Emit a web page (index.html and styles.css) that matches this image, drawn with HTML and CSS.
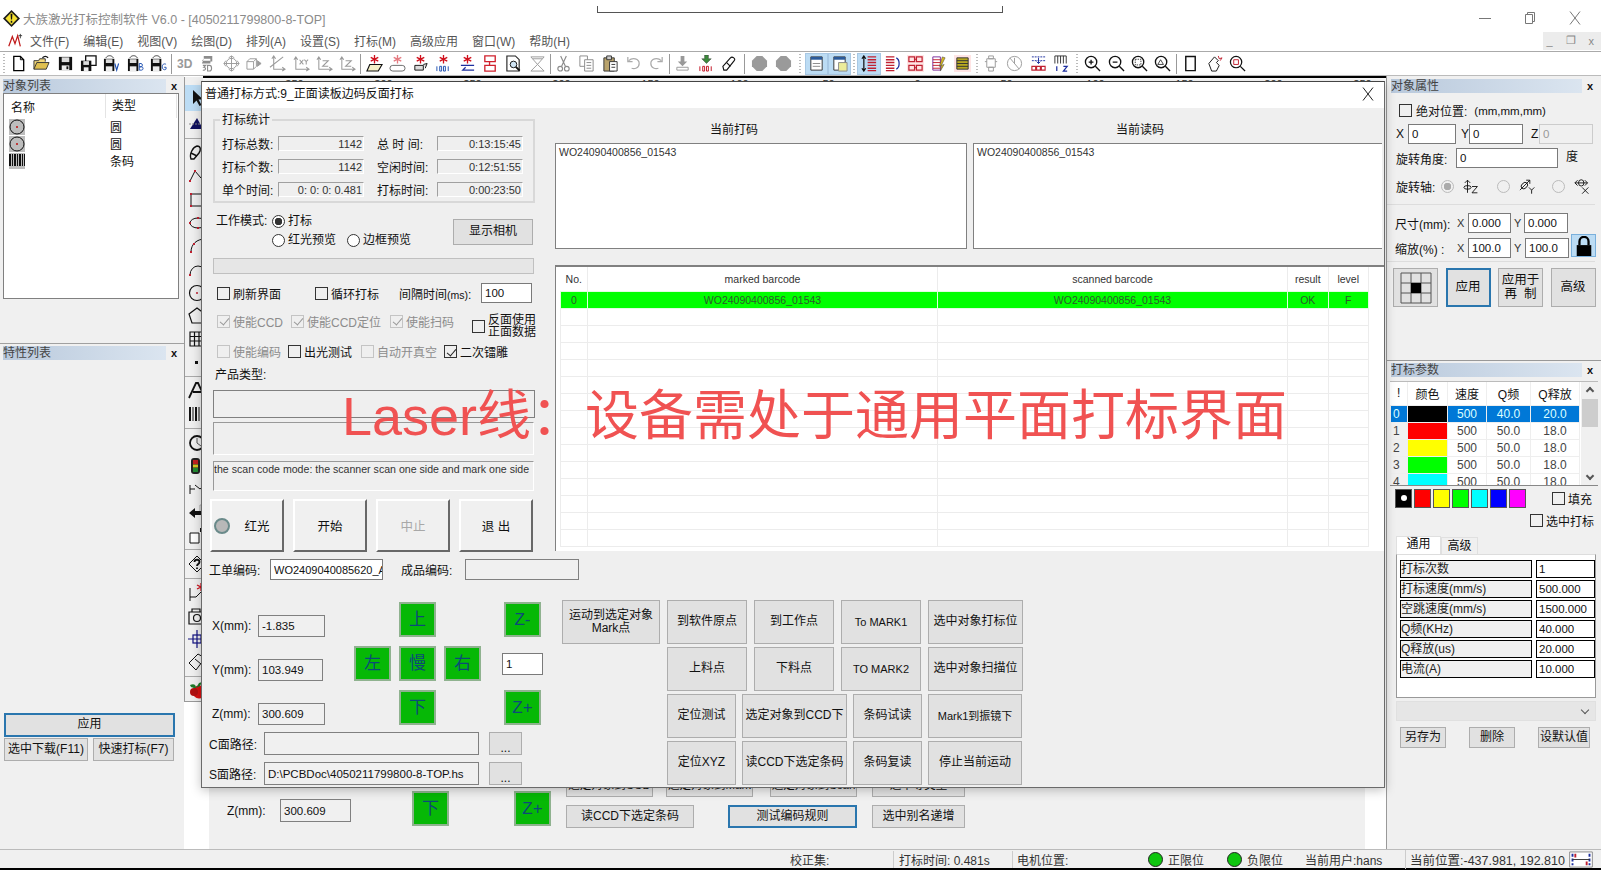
FILE: index.html
```html
<!DOCTYPE html>
<html>
<head>
    <title>大族激光打标控制软件 V6.0</title>
    <link rel="stylesheet" href="styles.css">
</head>
<body>
<svg class="defs" width="0" height="0">
    <symbol id="i-new" viewBox="0 0 18 18"><path d="M4 1.500h7l3.500 3.500v11.500h-10.500z" fill="#fff" stroke="#000" stroke-width="1.400"/><path d="M11 1.500v3.500h3.500" fill="none" stroke="#000"/></symbol>
    <symbol id="i-open" viewBox="0 0 18 18"><path d="M1 15V6h5l1-2h6v3" fill="#f4d97a" stroke="#333"/><path d="M1 15l3-7h13l-3 7z" fill="#e0c050" stroke="#333"/><path d="M10 3c2-2 4-2 6 0" fill="none" stroke="#111" stroke-width="1.400"/></symbol>
    <symbol id="i-save" viewBox="0 0 18 18"><path d="M2 2h14v14H2z" fill="#111"/><path d="M5 2.500h8v5H5z" fill="#ddd"/><path d="M5 11h8v5H5z" fill="#eee"/><path d="M10 12h2v3h-2z" fill="#111"/></symbol>
    <symbol id="i-saveall" viewBox="0 0 18 18"><path d="M6 1h11v10H6z" fill="#fff" stroke="#111" stroke-width="1.400"/><path d="M1 6h11v11H1z" fill="#111"/><path d="M3.500 6.500h6v4h-6z" fill="#ddd"/><path d="M4 13h5v4H4z" fill="#eee"/></symbol>
    <symbol id="i-savev" viewBox="0 0 18 18"><path d="M1 4h11v13H1z" fill="#111"/><path d="M3 4.500h7v4H3z" fill="#ddd"/><path d="M3 12h7v5H3z" fill="#eee"/><path d="M3 3c2-3 6-3 8 0" fill="none" stroke="#333"/><path d="M12.500 9l2 7 2-7" fill="none" stroke="#1d4fb0" stroke-width="1.200"/></symbol>
    <symbol id="i-saveb" viewBox="0 0 18 18"><path d="M1 4h11v13H1z" fill="#111"/><path d="M3 4.500h7v4H3z" fill="#ddd"/><path d="M3 12h7v5H3z" fill="#eee"/><path d="M3 3c2-3 6-3 8 0" fill="none" stroke="#333"/><path d="M13 9v7h2.500c2 0 2-3.500 0-3.500H13m0 0h2c1.700 0 1.700-3.500 0-3.500h-2" fill="none" stroke="#1d4fb0"/></symbol>
    <symbol id="i-saveg" viewBox="0 0 18 18"><path d="M1 4h11v13H1z" fill="#111"/><path d="M3 4.500h7v4H3z" fill="#ddd"/><path d="M3 12h7v5H3z" fill="#eee"/><path d="M3 3c2-3 6-3 8 0" fill="none" stroke="#333"/><path d="M17 10c-1-1-4-1-4 2.500s3 3.500 4 2.500v-2h-2" fill="none" stroke="#1d4fb0"/></symbol>
    <symbol id="i-cube3d" viewBox="0 0 18 18"><path d="M4 1h9v3H4zM4 4l-2 2h9v3H2zM11 4h2v3h-2z" fill="#8c8c8c"/><path d="M3 11h3l-2 2c3 0 2 4-1 3M8 11v6h2c3 0 3-6 0-6z" fill="none" stroke="#8c8c8c" stroke-width="1.200"/></symbol>
    <symbol id="i-orbit" viewBox="0 0 18 18" fill="none" stroke="#9a9a9a"><circle cx="9" cy="9" r="5.500"/><path d="M9 1v16M1 9h16M6 3l3-2 3 2M6 15l3 2 3-2M3 6L1 9l2 3M15 6l2 3-2 3"/></symbol>
    <symbol id="i-boxarrow" viewBox="0 0 18 18" fill="none" stroke="#9a9a9a"><path d="M1 7l3-3h7v8l-3 3H1zM1 7h7v8M8 7l3-3"/><path d="M12 6l4 3-4 3z" fill="#9a9a9a"/></symbol>
    <symbol id="i-axes" viewBox="0 0 18 18" fill="none" stroke="#9a9a9a" stroke-width="1.100"><path d="M5 1v14h12M1 13l14-11M3 4l2-3 2 3M14 13l3 2-3 2"/></symbol>
    <symbol id="i-axesxy" viewBox="0 0 18 18" fill="none" stroke="#9a9a9a" stroke-width="1.100"><path d="M3 2v13h14M1 5l2-3 2 3M14 13l3 2-3 2M7 5l4 5M11 5l-4 5M12 5l2 2 2-2M14 7v3"/></symbol>
    <symbol id="i-axesz" viewBox="0 0 18 18" fill="none" stroke="#9a9a9a" stroke-width="1.100"><path d="M3 2v13h14M1 5l2-3 2 3M14 13l3 2-3 2M7 6h6l-6 6h6"/></symbol>
    <symbol id="i-star" viewBox="0 0 18 18" stroke="#d0101c" stroke-width="1.400"><path d="M9 0v9M5 2.500l8 4M13 2.500l-8 4"/></symbol>
    <symbol id="i-mark1" viewBox="0 0 18 18"><use href="#i-star"/><path d="M4 10h13l-4 7H1z" fill="#f5f0c8" stroke="#111" stroke-width="1.200"/></symbol>
    <symbol id="i-mark2" viewBox="0 0 18 18"><use href="#i-star" opacity=".55"/><path d="M4 11h10a3 3 0 0 1 0 6H4a3 3 0 0 1 0-6z" fill="#fff" stroke="#666"/></symbol>
    <symbol id="i-mark3" viewBox="0 0 18 18"><use href="#i-star"/><path d="M3 11h9v5H3zM12 10l4-1-2 5" fill="#ddd" stroke="#111"/></symbol>
    <symbol id="i-mark4" viewBox="0 0 18 18"><use href="#i-star"/><path d="M2 12v5M5 12h2v5H5zM9 12h2v5H9zM14 12v5" fill="none" stroke="#1d4fb0"/></symbol>
    <symbol id="i-mark5" viewBox="0 0 18 18"><use href="#i-star"/><path d="M2 11h14M16 16H4l3-3" fill="none" stroke="#1d2f9f" stroke-width="1.300"/></symbol>
    <symbol id="i-linked" viewBox="0 0 18 18" fill="none" stroke="#d0202c" stroke-width="1.400"><path d="M3 1h11v6H3zM3 11h11v6H3zM8 7v4"/></symbol>
    <symbol id="i-preview" viewBox="0 0 18 18"><path d="M2 1h9l4 4v12H2z" fill="#fff" stroke="#222" stroke-width="1.200"/><circle cx="9" cy="10" r="3.500" fill="#cfe4f4" stroke="#111"/><path d="M11.500 12.500l4 4" stroke="#111" stroke-width="2"/></symbol>
    <symbol id="i-hourglass" viewBox="0 0 18 18" fill="none" stroke="#9a9a9a"><path d="M2 2h14L9 10zM9 10l-7 7h14zM4 4h10"/></symbol>
    <symbol id="i-cut" viewBox="0 0 18 18" fill="none" stroke="#8a8a8a" stroke-width="1.200"><path d="M6 1l5 11M12 1l-5 11"/><circle cx="5.500" cy="14.500" r="2.500"/><circle cx="12.500" cy="14.500" r="2.500"/></symbol>
    <symbol id="i-copy" viewBox="0 0 18 18" fill="#fff" stroke="#8a8a8a"><path d="M2 1h8v11H2z"/><path d="M7 5h9v12H7z"/><path d="M9 8h5M9 11h5M9 14h5"/></symbol>
    <symbol id="i-paste" viewBox="0 0 18 18"><path d="M2 3h11v14H2z" fill="#b9a36c" stroke="#333"/><path d="M5 1h5v4H5z" fill="#ccc" stroke="#333"/><path d="M8 7h8v10H8z" fill="#fff" stroke="#333"/><path d="M10 10h4M10 13h4" stroke="#333"/></symbol>
    <symbol id="i-undo" viewBox="0 0 18 18" fill="none" stroke="#aaa" stroke-width="1.300"><path d="M4 6c4-4 11-2 11 3s-5 6-8 5M3 2v5h5"/></symbol>
    <symbol id="i-redo" viewBox="0 0 18 18" fill="none" stroke="#aaa" stroke-width="1.300"><path d="M14 6c-4-4-11-2-11 3s5 6 8 5M15 2v5h-5"/></symbol>
    <symbol id="i-down" viewBox="0 0 18 18"><path d="M7 1h4v6h3l-5 5-5-5h3z" fill="#999"/><path d="M3 13h12v3H3z" fill="none" stroke="#999"/></symbol>
    <symbol id="i-down1001" viewBox="0 0 18 18"><path d="M7 0h4v4h3l-5 5-5-5h3z" fill="#3c8a3c" stroke="#333" stroke-width=".5"/><path d="M2 12v5M5 12h2v5H5zM9 12h2v5H9zM14 12v5" fill="none" stroke="#c01020"/></symbol>
    <symbol id="i-eraser" viewBox="0 0 18 18" fill="#fff" stroke="#111" stroke-width="1.200"><path d="M2 12l8-9c2-2 6 1 4 3l-8 10H3z"/><path d="M6 8l4 4"/></symbol>
    <symbol id="i-octo" viewBox="0 0 18 18"><path d="M6 1h6l5 5v6l-5 5H6l-5-5V6z" fill="#9a9a9a"/></symbol>
    <symbol id="i-panel1" viewBox="0 0 18 18"><path d="M3 2h12v14H3z" fill="#fff" stroke="#333"/><path d="M3 2h12v3H3z" fill="#2a5a9a"/><path d="M5 9h8M5 12h8" stroke="#888"/></symbol>
    <symbol id="i-panel2" viewBox="0 0 18 18"><path d="M3 2h12v14H3z" fill="#fff" stroke="#333"/><path d="M3 2h12v3H3z" fill="#2a5a9a"/><path d="M8 8h9v9H8z" fill="#ecec9a" stroke="#888"/></symbol>
    <symbol id="i-spacing" viewBox="0 0 18 18"><path d="M3 1v16M1 4l2-3 2 3M1 14l2 3 2-3" fill="none" stroke="#111" stroke-width="1.300"/><path d="M7 2h9M7 5h9M7 8h9M7 11h9M7 14h9M7 16.500h9" stroke="#c02030" stroke-width="1.500"/></symbol>
    <symbol id="i-spacing2" viewBox="0 0 18 18"><path d="M2 2h9M2 5h9M2 8h9M2 11h9M2 14h9M2 16.500h9" stroke="#c02030" stroke-width="1.500"/><path d="M13 3c4 2 4 10 0 12" fill="none" stroke="#1d2f9f" stroke-width="1.300"/></symbol>
    <symbol id="i-nodes" viewBox="0 0 18 18" fill="none" stroke="#c02030" stroke-width="1.300"><path d="M2 2h6v5H2zM10 2h6v5h-6zM2 11h6v5H2zM10 11h6v5h-6zM8 4.500h2M8 13.500h2"/></symbol>
    <symbol id="i-hatch" viewBox="0 0 18 18"><path d="M3 2h8v14H3z" fill="none" stroke="#7a2a9a"/><path d="M3 5h8M3 8h8M3 11h8M3 14h8" stroke="#c02030"/><path d="M13 2l3 1-4 8 3-1-4 7 1-6-2 1z" fill="#d8b820" stroke="#333" stroke-width=".5"/></symbol>
    <symbol id="i-stack" viewBox="0 0 18 18"><path d="M3 3h12v12H3z" fill="#b8a820" stroke="#333"/><path d="M3 6h12M3 9h12M3 12h12" stroke="#333"/></symbol>
    <symbol id="i-lens" viewBox="0 0 18 18" fill="none" stroke="#9a9a9a"><path d="M6 1h5v3H6zM4 4h9v9H4zM6 13h5v4H6zM2 7h2M13 7h2"/></symbol>
    <symbol id="i-ban" viewBox="0 0 18 18" fill="none" stroke="#9a9a9a"><circle cx="9" cy="9" r="7.500"/><path d="M4 3l10 12M9 3v6"/></symbol>
    <symbol id="i-arr" viewBox="0 0 18 18" fill="none"><path d="M2 2h14M2 6h14" stroke="#1d2f9f" stroke-dasharray="2 1"/><path d="M9 3v6m-2-2l2 2 2-2" stroke="#1d2f9f"/><path d="M2 12h4v4H2zM7 12h4v4H7zM12 12h4v4h-4z" stroke="#c02030" stroke-width="1.200"/></symbol>
    <symbol id="i-num" viewBox="0 0 18 18" fill="none"><path d="M2 1v8M5 1v8M8 1v8M11 1v8M14 1v8M2 1h12" stroke="#333"/><path d="M4 12v5M11 12h4l-4 5h4" stroke="#1d2f9f" stroke-width="1.300"/></symbol>
    <symbol id="i-zoomin" viewBox="0 0 18 18" fill="none" stroke="#111" stroke-width="1.400"><circle cx="7.500" cy="7.500" r="6"/><path d="M12 12l5 5M5 7.500h5M7.500 5v5" /></symbol>
    <symbol id="i-zoomout" viewBox="0 0 18 18" fill="none" stroke="#111" stroke-width="1.400"><circle cx="7.500" cy="7.500" r="6"/><path d="M12 12l5 5M5 7.500h5"/></symbol>
    <symbol id="i-zoomsel" viewBox="0 0 18 18" fill="none" stroke="#111" stroke-width="1.400"><circle cx="7.500" cy="7.500" r="6"/><path d="M12 12l5 5"/><path d="M4.500 4.500h6v6h-6z" stroke-width=".8" stroke-dasharray="1.500 1"/></symbol>
    <symbol id="i-zoomall" viewBox="0 0 18 18" fill="none" stroke="#111" stroke-width="1.400"><circle cx="7.500" cy="7.500" r="6"/><path d="M12 12l5 5"/><path d="M4 10l3-5 3 5z" stroke-width=".8"/></symbol>
    <symbol id="i-page" viewBox="0 0 18 18"><path d="M4 1.500h10v15H4z" fill="#fff" stroke="#111" stroke-width="1.500"/></symbol>
    <symbol id="i-hand" viewBox="0 0 18 18" fill="none" stroke="#111"><path d="M3 9l6-7 4 4-2 2 3 3-3 6H6z"/><path d="M13 1l1 3 3-1-2 3" stroke="#c02030"/></symbol>
    <symbol id="i-zoomred" viewBox="0 0 18 18" fill="none" stroke="#111" stroke-width="1.300"><circle cx="7.500" cy="7.500" r="6"/><path d="M12 12l5 5"/><path d="M5 5h5v5H5z" stroke="#c02030" stroke-width="1"/></symbol>
    <symbol id="v-select" viewBox="0 0 18 18"><path d="M5 1v14l3.500-3.500 3 5.500 2-1-3-5.500h4.500z" fill="#111"/></symbol>
    <symbol id="v-node" viewBox="0 0 18 18"><path d="M2 13L9 2l6 11z" fill="#101060"/><path d="M1 8h16" stroke="#888" stroke-dasharray="2 1"/></symbol>
    <symbol id="v-pen" viewBox="0 0 18 18" fill="none" stroke="#111" stroke-width="1.400"><path d="M3 15c-2-5 2-12 6-13 4 0 4 4 2 7l-5 6z"/><path d="M3 9l6 3"/></symbol>
    <symbol id="v-curve" viewBox="0 0 18 18" fill="none" stroke="#111"><path d="M2 14L7 4l6 7 4-5"/><path d="M1 14h2M7 3v2" stroke="#c02030" stroke-width="2"/></symbol>
    <symbol id="v-rect" viewBox="0 0 18 18"><path d="M3 3h14v12H3z" fill="none" stroke="#111"/><path d="M2 14h2v2H2zM2 2h2v2H2z" fill="#c02030"/></symbol>
    <symbol id="v-ellipse" viewBox="0 0 18 18"><ellipse cx="10" cy="9" rx="8" ry="5" fill="none" stroke="#111"/><path d="M9 3h2v2H9zM9 13h2v2H9zM1 8h2v2H1z" fill="#c02030"/></symbol>
    <symbol id="v-arc" viewBox="0 0 18 18"><path d="M3 15C3 7 9 2 17 2" fill="none" stroke="#111"/><path d="M2 14h2v2H2zM5 6h2v2H5z" fill="#c02030"/></symbol>
    <symbol id="v-arc2" viewBox="0 0 18 18"><path d="M2 15a8 9 0 0 1 16 0" fill="none" stroke="#111"/><path d="M1 14h2v2H1z" fill="#c02030"/></symbol>
    <symbol id="v-circle" viewBox="0 0 18 18"><circle cx="9" cy="9" r="7.500" fill="none" stroke="#111" stroke-width="1.200"/><circle cx="9" cy="9" r="1" fill="#c02030"/></symbol>
    <symbol id="v-poly" viewBox="0 0 18 18"><path d="M9 1l8 6-3 9H4L1 7z" fill="none" stroke="#111" stroke-width="1.200"/></symbol>
    <symbol id="v-grid" viewBox="0 0 18 18"><path d="M2 2h14v14H2zM2 6.500h14M2 11h14M6.500 2v14M11 2v14" fill="none" stroke="#111" stroke-width="1.200"/></symbol>
    <symbol id="v-dot" viewBox="0 0 18 18"><path d="M7 7h3v3H7z" fill="#111"/></symbol>
    <symbol id="v-text" viewBox="0 0 18 18"><path d="M1 16L8 1h2l7 15M5 10h8" fill="none" stroke="#111" stroke-width="1.800"/></symbol>
    <symbol id="v-barcode" viewBox="0 0 18 18"><path d="M1 2h2v14H1zM4.500 2h1v14h-1zM7 2h2v14H7zM10.500 2h1v14h-1zM13 2h2v14h-2zM16 2h1v14h-1z" fill="#111"/></symbol>
    <symbol id="v-clock" viewBox="0 0 18 18" fill="none" stroke="#111"><circle cx="9" cy="9" r="7" stroke-width="1.800"/><path d="M9 4v5M9 9l4 3" stroke="#555"/></symbol>
    <symbol id="v-light" viewBox="0 0 18 18"><rect x="3" y="1" width="9" height="16" rx="3" fill="#222"/><path d="M5 3h5v4H5z" fill="#c02020"/><path d="M5 7.500h5v3H5z" fill="#d8c820"/><path d="M5 11h5v4H5z" fill="#208a30"/></symbol>
    <symbol id="v-io" viewBox="0 0 18 18" fill="none" stroke="#111"><path d="M2 5v9M2 9h5M7 5l5 4 5-4"/></symbol>
    <symbol id="v-back" viewBox="0 0 18 18"><path d="M1 10l6-5v3h6v4H7v3z" fill="#111"/><path d="M12 8V2h2M15 8V3h2" fill="none" stroke="#aaa"/></symbol>
    <symbol id="v-box" viewBox="0 0 18 18"><path d="M2 6h9v10H2z" fill="#fff" stroke="#111"/><path d="M12 1h4v4h-4z" fill="#111"/></symbol>
    <symbol id="v-help" viewBox="0 0 18 18" fill="none" stroke="#111"><path d="M9 1l8 8-8 8-8-8z" stroke-linejoin="round"/><path d="M6.500 7c0-3 5-3 5 0 0 2-2.500 2-2.500 4M9 12.500v1.500" stroke-width="1.800"/></symbol>
    <symbol id="v-laser" viewBox="0 0 18 18"><path d="M2 5v14M2 14h6l5-5" fill="none" stroke="#111"/><g stroke="#d0101c" stroke-width="1.300"><path d="M13 0v8M9 2l8 4M17 2l-8 4"/></g></symbol>
    <symbol id="v-camera" viewBox="0 0 18 18" fill="none" stroke="#111" stroke-width="1.200"><path d="M1 5h16v12H1zM4 5V2h8v3"/><circle cx="9" cy="11" r="3.500"/></symbol>
    <symbol id="v-cross" viewBox="0 0 18 18" fill="none" stroke="#101080" stroke-width="1.200"><path d="M9 0v18M0 9h18"/><rect x="5" y="5" width="8" height="8"/></symbol>
    <symbol id="v-tag" viewBox="0 0 18 18" fill="none" stroke="#111"><path d="M1 10l9-9 7 4-9 12z"/><path d="M7 6l6 5"/></symbol>
    <symbol id="v-apple" viewBox="0 0 18 18"><circle cx="11" cy="11" r="6.500" fill="#d81010"/><circle cx="6" cy="11" r="4" fill="#b01010"/><path d="M2 4c4-2 6 0 6 3-3 0-5 0-6-3zM8 7l3-5 3-1-2 4z" fill="#1f7a2a"/></symbol>
    <symbol id="r-z" viewBox="0 0 18 18" fill="none" stroke="#111"><path d="M5 2v14M2 5l3-3 3 3"/><ellipse cx="5" cy="10" rx="4" ry="2"/><path d="M10 9h6l-6 7h6"/></symbol>
    <symbol id="r-y" viewBox="0 0 18 18" fill="none" stroke="#111"><path d="M1 13L12 2M8 2h4v4"/><ellipse cx="6" cy="8" rx="3" ry="4" transform="rotate(45 6 8)"/><path d="M11 10l3 3 3-3M14 13v4"/></symbol>
    <symbol id="r-x" viewBox="0 0 18 18" fill="none" stroke="#111"><path d="M1 5h14M4 2L1 5l3 3M12 2l3 3-3 3"/><ellipse cx="8" cy="5" rx="3" ry="3.500"/><path d="M9 10l7 7M16 10l-7 7"/></symbol>
    <symbol id="l-circle" viewBox="0 0 16 16"><path d="M0 0h16v16H0z" fill="#bdbdbd"/><circle cx="8" cy="8" r="7" fill="none" stroke="#111"/><circle cx="8" cy="8" r="1" fill="#c01010"/></symbol>
    <symbol id="l-barcode" viewBox="0 0 16 16"><path d="M0 0h16v16H0z" fill="#bdbdbd"/><path d="M0 1h2v12H0zM3 1h1v12H3zM5 1h2v12H5zM8 1h1v12H8zM10 1h2v12h-2zM13 1h1v12h-1zM15 1h1v12h-1z" fill="#111"/></symbol>
    <symbol id="s-lock" viewBox="0 0 18 22"><path d="M4 10V6a5 5 0 0 1 10 0v4" fill="none" stroke="#000" stroke-width="2.500"/><path d="M1 10h16v12H1z" fill="#000"/></symbol>
    <symbol id="s-grid" viewBox="0 0 32 32"><path d="M1 1h30v30H1zM1 11h30M1 21h30M11 1v30M21 1v30" fill="#e1e1e1" stroke="#555"/><path d="M11 11h10v10H11z" fill="#000"/></symbol>
    <symbol id="s-logo" viewBox="0 0 18 18"><path d="M9 0l9 9-9 9-9-9z" fill="#1a1a1a"/><path d="M9 2.500L15.500 9 9 15.500 2.500 9z" fill="#f4e033"/><path d="M8 4h2l-.4 6H8.400zM8.200 11.500h1.600v2H8.200z" fill="#111"/></symbol>
    <symbol id="s-menu" viewBox="0 0 18 18" fill="none"><path d="M2 15L6 4l3 8 3-9 3 12" stroke="#c01818" stroke-width="1.400"/><path d="M15 1v5M13 3h4" stroke="#333"/></symbol>
    <symbol id="s-chain" viewBox="0 0 26 18"><path d="M1 1h24v16H1z" fill="#fff" stroke="#888"/><path d="M4 3v12M22 3v12" stroke="#1d2f9f" stroke-width="2" stroke-dasharray="3 2"/><path d="M7 3v4M19 11v4" stroke="#c02030" stroke-width="2"/><path d="M4 9h18" stroke="#333"/></symbol>
    <symbol id="w-min" viewBox="0 0 14 14"><path d="M1 7.500h12" stroke="#777"/></symbol>
    <symbol id="w-max" viewBox="0 0 14 14" fill="#fff" stroke="#777"><path d="M4.500 1.500h7v9h-7z"/><path d="M2.500 3.500h7v9h-7z"/></symbol>
    <symbol id="w-close" viewBox="0 0 14 14" stroke="#777"><path d="M2 .5l10 13M12 .5L2 13.500" fill="none"/></symbol>
    <symbol id="w-close-dark" viewBox="0 0 14 14" stroke="#222"><path d="M2 .5l10 13M12 .5L2 13.500" fill="none"/></symbol>
</svg>

<div class="titlebar">
    <svg class="logo"><use href="#s-logo"/></svg>
    <span class="app-title">大族激光打标控制软件 V6.0 - [4050211799800-8-TOP]</span>
    <div class="scrap-line"></div>
    <div class="win-btns">
        <svg><use href="#w-min"/></svg>
        <svg><use href="#w-max"/></svg>
        <svg><use href="#w-close"/></svg>
    </div>
</div>

<div class="menubar">
    <svg class="menu-icon"><use href="#s-menu"/></svg>
    <span>文件(F)</span><span>编辑(E)</span><span>视图(V)</span><span>绘图(D)</span><span>排列(A)</span><span>设置(S)</span><span>打标(M)</span><span>高级应用</span><span>窗口(W)</span><span>帮助(H)</span>
    <div class="mdi-btns"><span>_</span><span>❐</span><span>x</span></div>
</div>

<div class="toolbar">
    <i class="grip"></i>
    <span class="tb"><svg><use href="#i-new"/></svg></span>
    <span class="tb"><svg><use href="#i-open"/></svg></span>
    <span class="tb"><svg><use href="#i-save"/></svg></span>
    <span class="tb"><svg><use href="#i-saveall"/></svg></span>
    <span class="tb"><svg><use href="#i-savev"/></svg></span>
    <span class="tb"><svg><use href="#i-saveb"/></svg></span>
    <span class="tb"><svg><use href="#i-saveg"/></svg></span>
    <i class="sep"></i>
    <span class="tb tb-3d">3D</span>
    <span class="tb"><svg><use href="#i-cube3d"/></svg></span>
    <span class="tb"><svg><use href="#i-orbit"/></svg></span>
    <span class="tb"><svg><use href="#i-boxarrow"/></svg></span>
    <span class="tb"><svg><use href="#i-axes"/></svg></span>
    <span class="tb"><svg><use href="#i-axesxy"/></svg></span>
    <span class="tb"><svg><use href="#i-axesz"/></svg></span>
    <span class="tb"><svg><use href="#i-axesz"/></svg></span>
    <i class="sep"></i>
    <span class="tb"><svg><use href="#i-mark1"/></svg></span>
    <span class="tb"><svg><use href="#i-mark2"/></svg></span>
    <span class="tb"><svg><use href="#i-mark3"/></svg></span>
    <span class="tb"><svg><use href="#i-mark4"/></svg></span>
    <span class="tb"><svg><use href="#i-mark5"/></svg></span>
    <span class="tb"><svg><use href="#i-linked"/></svg></span>
    <span class="tb"><svg><use href="#i-preview"/></svg></span>
    <span class="tb"><svg><use href="#i-hourglass"/></svg></span>
    <i class="sep"></i>
    <span class="tb"><svg><use href="#i-cut"/></svg></span>
    <span class="tb"><svg><use href="#i-copy"/></svg></span>
    <span class="tb"><svg><use href="#i-paste"/></svg></span>
    <span class="tb"><svg><use href="#i-undo"/></svg></span>
    <span class="tb"><svg><use href="#i-redo"/></svg></span>
    <i class="sep"></i>
    <span class="tb"><svg><use href="#i-down"/></svg></span>
    <span class="tb"><svg><use href="#i-down1001"/></svg></span>
    <span class="tb"><svg><use href="#i-eraser"/></svg></span>
    <i class="sep sep-3"></i>
    <span class="tb"><svg><use href="#i-octo"/></svg></span>
    <span class="tb"><svg><use href="#i-octo"/></svg></span>
    <i class="grip grip-wide"></i>
    <span class="tb tb-on"><svg><use href="#i-panel1"/></svg></span>
    <span class="tb tb-on"><svg><use href="#i-panel2"/></svg></span>
    <i class="grip"></i>
    <span class="tb tb-on"><svg><use href="#i-spacing"/></svg></span>
    <span class="tb"><svg><use href="#i-spacing2"/></svg></span>
    <span class="tb tb-pink"><svg><use href="#i-nodes"/></svg></span>
    <span class="tb"><svg><use href="#i-hatch"/></svg></span>
    <span class="tb tb-pink"><svg><use href="#i-stack"/></svg></span>
    <i class="grip"></i>
    <span class="tb"><svg><use href="#i-lens"/></svg></span>
    <span class="tb"><svg><use href="#i-ban"/></svg></span>
    <span class="tb"><svg><use href="#i-arr"/></svg></span>
    <span class="tb"><svg><use href="#i-num"/></svg></span>
    <i class="grip grip-mid"></i>
    <span class="tb"><svg><use href="#i-zoomin"/></svg></span>
    <span class="tb"><svg><use href="#i-zoomout"/></svg></span>
    <span class="tb"><svg><use href="#i-zoomsel"/></svg></span>
    <span class="tb"><svg><use href="#i-zoomall"/></svg></span>
    <i class="sep sep-2"></i>
    <span class="tb"><svg><use href="#i-page"/></svg></span>
    <span class="tb"><svg><use href="#i-hand"/></svg></span>
    <span class="tb"><svg><use href="#i-zoomred"/></svg></span>
</div>

<div class="workspace">
    <aside class="left-panel">
        <div class="panel-head"><span class="panel-title">对象列表</span><b class="panel-x">x</b></div>
        <div class="object-list">
            <div class="object-head"><span>名称</span><span>类型</span></div>
            <div class="object-row"><svg><use href="#l-circle"/></svg><span>圆</span></div>
            <div class="object-row"><svg><use href="#l-circle"/></svg><span>圆</span></div>
            <div class="object-row"><svg><use href="#l-barcode"/></svg><span>条码</span></div>
        </div>
        <div class="panel-head panel-head-second"><span class="panel-title">特性列表</span><b class="panel-x">x</b></div>
        <div class="left-actions">
            <button class="btn btn-default btn-wide">应用</button>
            <div class="left-actions-row">
                <button class="btn">选中下载(F11)</button>
                <button class="btn">快速打标(F7)</button>
            </div>
        </div>
    </aside>

    <div class="vtools-col">
        <div class="vtools">
            <span class="vt vt-on"><svg><use href="#v-select"/></svg></span>
            <span class="vt"><svg><use href="#v-node"/></svg></span>
            <i class="vsep"></i>
            <span class="vt"><svg><use href="#v-pen"/></svg></span>
            <span class="vt"><svg><use href="#v-curve"/></svg></span>
            <span class="vt"><svg><use href="#v-rect"/></svg></span>
            <span class="vt"><svg><use href="#v-ellipse"/></svg></span>
            <span class="vt"><svg><use href="#v-arc"/></svg></span>
            <span class="vt"><svg><use href="#v-arc2"/></svg></span>
            <span class="vt"><svg><use href="#v-circle"/></svg></span>
            <span class="vt"><svg><use href="#v-poly"/></svg></span>
            <span class="vt"><svg><use href="#v-grid"/></svg></span>
            <span class="vt"><svg><use href="#v-dot"/></svg></span>
            <i class="vsep"></i>
            <span class="vt"><svg><use href="#v-text"/></svg></span>
            <span class="vt"><svg><use href="#v-barcode"/></svg></span>
            <i class="vsep"></i>
            <span class="vt"><svg><use href="#v-clock"/></svg></span>
            <span class="vt"><svg><use href="#v-light"/></svg></span>
            <span class="vt"><svg><use href="#v-io"/></svg></span>
            <span class="vt"><svg><use href="#v-back"/></svg></span>
            <span class="vt"><svg><use href="#v-box"/></svg></span>
            <i class="vsep"></i>
            <span class="vt"><svg><use href="#v-help"/></svg></span>
            <i class="vsep"></i>
            <span class="vt"><svg><use href="#v-laser"/></svg></span>
            <span class="vt"><svg><use href="#v-camera"/></svg></span>
            <span class="vt"><svg><use href="#v-cross"/></svg></span>
            <span class="vt"><svg><use href="#v-tag"/></svg></span>
            <i class="vsep"></i>
            <span class="vt"><svg><use href="#v-apple"/></svg></span>
        </div>
    </div>

    <main class="canvas">
        <div class="ruler"><span>350</span><span>300</span><span>250</span><span>200</span><span>150</span><span>100</span><span>50</span><span>0</span><span>50</span><span>100</span><span>150</span><span>200</span><span>250</span></div>
        <div class="back-dialog">
            <label class="back-label">Z(mm):</label>
            <input class="txt txt-gray back-z" value="300.609">
            <button class="jog back-down">下</button>
            <button class="jog back-zplus">Z+</button>
            <div class="back-cmds">
                <div class="back-clip">
                    <button class="btn">选定对象到CCD</button>
                    <button class="btn">选定对象到Mark</button>
                    <button class="btn">选定对象到Scan</button>
                    <button class="btn">选中等类型</button>
                </div>
                <div class="back-row">
                    <button class="btn">读CCD下选定条码</button>
                    <button class="btn btn-default">测试编码规则</button>
                    <button class="btn">选中别名递增</button>
                </div>
            </div>
        </div>
    </main>

    <aside class="right-panel">
        <div class="panel-head"><span class="panel-title">对象属性</span><b class="panel-x">x</b></div>
        <div class="prop-abs"><input type="checkbox" class="cb"><span>绝对位置:</span><span class="prop-unit">(mm,mm,mm)</span></div>
        <div class="prop-xyz">
            <span>X</span><input class="txt" value="0">
            <span>Y</span><input class="txt" value="0">
            <span>Z</span><input class="txt txt-off" value="0" disabled>
        </div>
        <div class="prop-angle"><span>旋转角度:</span><input class="txt" value="0"><span class="prop-deg">度</span></div>
        <div class="prop-axis">
            <span>旋转轴:</span>
            <input type="radio" class="rb rb-off" checked disabled><svg><use href="#r-z"/></svg>
            <input type="radio" class="rb rb-off" disabled><svg><use href="#r-y"/></svg>
            <input type="radio" class="rb rb-off" disabled><svg><use href="#r-x"/></svg>
        </div>
        <div class="prop-size">
            <span>尺寸(mm):</span><span class="axis-x">X</span><input class="txt" value="0.000"><span class="axis-y">Y</span><input class="txt" value="0.000">
        </div>
        <div class="prop-scale">
            <span>缩放(%) :</span><span class="axis-x">X</span><input class="txt" value="100.0"><span class="axis-y">Y</span><input class="txt" value="100.0"><span class="lock-btn"><svg><use href="#s-lock"/></svg></span>
        </div>
        <div class="prop-btns">
            <button class="btn"><svg class="grid-icon"><use href="#s-grid"/></svg></button>
            <button class="btn btn-default">应用</button>
            <button class="btn btn-lines">应用于<br>再 &nbsp;制</button>
            <button class="btn">高级</button>
        </div>

        <div class="panel-head panel-head-params"><span class="panel-title">打标参数</span><b class="panel-x">x</b></div>
        <div class="param-box">
            <table class="param-table">
                <tr class="param-head"><th>!</th><th>颜色</th><th>速度</th><th>Q频</th><th>Q释放</th></tr>
                <tr class="param-on"><td>0</td><td class="sw-black"></td><td>500</td><td>40.0</td><td>20.0</td></tr>
                <tr><td>1</td><td class="sw-red"></td><td>500</td><td>50.0</td><td>18.0</td></tr>
                <tr><td>2</td><td class="sw-yellow"></td><td>500</td><td>50.0</td><td>18.0</td></tr>
                <tr><td>3</td><td class="sw-green"></td><td>500</td><td>50.0</td><td>18.0</td></tr>
                <tr><td>4</td><td class="sw-cyan"></td><td>500</td><td>50.0</td><td>18.0</td></tr>
            </table>
            <div class="scrollbar"><span class="chev-up"></span><i class="thumb"></i><span class="chev-down"></span></div>
        </div>
        <div class="swatch-row">
            <span class="swatch sw-black swatch-dot"></span><span class="swatch sw-red"></span><span class="swatch sw-yellow"></span><span class="swatch sw-green"></span><span class="swatch sw-cyan"></span><span class="swatch sw-blue"></span><span class="swatch sw-magenta"></span>
            <label class="chk swatch-fill"><input type="checkbox" class="cb"><span>填充</span></label>
        </div>
        <label class="chk selected-mark"><input type="checkbox" class="cb"><span>选中打标</span></label>
        <div class="tabs"><span class="tab tab-on">通用</span><span class="tab">高级</span></div>
        <div class="tab-body">
            <div class="param-row"><span>打标次数</span><input value="1"></div>
            <div class="param-row"><span>打标速度(mm/s)</span><input value="500.000"></div>
            <div class="param-row"><span>空跳速度(mm/s)</span><input value="1500.000"></div>
            <div class="param-row"><span>Q频(KHz)</span><input value="40.000"></div>
            <div class="param-row"><span>Q释放(us)</span><input value="20.000"></div>
            <div class="param-row"><span>电流(A)</span><input value="10.000"></div>
        </div>
        <div class="combo"><span class="chev-down"></span></div>
        <div class="param-actions">
            <button class="btn">另存为</button>
            <button class="btn">删除</button>
            <button class="btn">设默认值</button>
        </div>
    </aside>
</div>

<div class="statusbar">
    <span class="st-cal">校正集:</span>
    <span class="st-time">打标时间: 0.481s</span>
    <span class="st-motor">电机位置:</span>
    <span class="st-led"></span><span class="st-limit">正限位</span>
    <span class="st-led"></span><span class="st-limit st-neg">负限位</span>
    <span class="st-user">当前用户:hans</span>
    <span class="st-pos">当前位置:-437.981, 192.810</span>
    <svg class="st-chain"><use href="#s-chain"/></svg>
</div>

<div class="dialog">
    <div class="dlg-head"><span>普通打标方式:9_正面读板边码反面打标</span><svg class="dlg-x"><use href="#w-close-dark"/></svg></div>

    <div class="dlg-top">
        <div class="dlg-left">
            <fieldset class="stats">
                <legend>打标统计</legend>
                <div class="stats-grid">
                    <span>打标总数:</span><span class="field">1142</span><span class="stat-label-b">总 时 间:</span><span class="field">0:13:15:45</span>
                    <span>打标个数:</span><span class="field">1142</span><span class="stat-label-b">空闲时间:</span><span class="field">0:12:51:55</span>
                    <span>单个时间:</span><span class="field">0: 0: 0: 0.481</span><span class="stat-label-b">打标时间:</span><span class="field">0:00:23:50</span>
                </div>
            </fieldset>

            <div class="mode-row">
                <span class="mode-label">工作模式:</span>
                <div class="mode-opts">
                    <label class="chk"><input type="radio" class="rb" name="mode" checked><span>打标</span></label>
                    <div class="mode-line">
                        <label class="chk"><input type="radio" class="rb" name="mode"><span>红光预览</span></label>
                        <label class="chk"><input type="radio" class="rb" name="mode"><span>边框预览</span></label>
                    </div>
                </div>
                <button class="btn btn-camera">显示相机</button>
            </div>

            <div class="progress"></div>

            <div class="opt-row opt-row-a">
                <label class="chk"><input type="checkbox" class="cb"><span>刷新界面</span></label>
                <label class="chk"><input type="checkbox" class="cb"><span>循环打标</span></label>
                <span class="interval">间隔时间<small>(ms)</small>:</span>
                <input class="txt" value="100">
            </div>
            <div class="opt-row opt-row-b">
                <label class="chk chk-off"><input type="checkbox" class="cb" checked disabled><span>使能CCD</span></label>
                <label class="chk chk-off"><input type="checkbox" class="cb" checked disabled><span>使能CCD定位</span></label>
                <label class="chk chk-off"><input type="checkbox" class="cb" checked disabled><span>使能扫码</span></label>
                <label class="chk chk-two"><input type="checkbox" class="cb"><span class="two-line">反面使用<br>正面数据</span></label>
            </div>
            <div class="opt-row opt-row-c">
                <label class="chk chk-off"><input type="checkbox" class="cb" disabled><span>使能编码</span></label>
                <label class="chk"><input type="checkbox" class="cb"><span>出光测试</span></label>
                <label class="chk chk-off"><input type="checkbox" class="cb" disabled><span>自动开真空</span></label>
                <label class="chk"><input type="checkbox" class="cb" checked><span>二次镭雕</span></label>
            </div>

            <div class="product-label">产品类型:</div>
            <div class="box box-product"></div>
            <div class="box box-empty"></div>
            <div class="box box-mode">the scan code mode: the scanner scan one side and mark one side</div>

            <div class="big-btns">
                <button class="big-btn big-btn-red"><i class="led"></i>红光</button>
                <button class="big-btn">开始</button>
                <button class="big-btn" disabled>中止</button>
                <button class="big-btn">退 出</button>
            </div>
        </div>

        <div class="dlg-right">
            <div class="code-titles"><span>当前打码</span><span>当前读码</span></div>
            <div class="code-boxes">
                <div class="code-box">WO24090400856_01543</div>
                <div class="code-box">WO24090400856_01543</div>
            </div>
            <div class="result-wrap">
                <table class="result-table">
                    <colgroup><col class="c-no"><col class="c-code"><col class="c-code"><col class="c-res"><col class="c-res"></colgroup>
                    <tr class="result-head"><th>No.</th><th>marked barcode</th><th>scanned barcode</th><th>result</th><th>level</th></tr>
                    <tr class="result-ok"><td>0</td><td>WO24090400856_01543</td><td>WO24090400856_01543</td><td>OK</td><td>F</td></tr>
                    <tr><td></td><td></td><td></td><td></td><td></td></tr>
                    <tr><td></td><td></td><td></td><td></td><td></td></tr>
                    <tr><td></td><td></td><td></td><td></td><td></td></tr>
                    <tr><td></td><td></td><td></td><td></td><td></td></tr>
                    <tr><td></td><td></td><td></td><td></td><td></td></tr>
                    <tr><td></td><td></td><td></td><td></td><td></td></tr>
                    <tr><td></td><td></td><td></td><td></td><td></td></tr>
                    <tr><td></td><td></td><td></td><td></td><td></td></tr>
                    <tr><td></td><td></td><td></td><td></td><td></td></tr>
                    <tr><td></td><td></td><td></td><td></td><td></td></tr>
                    <tr><td></td><td></td><td></td><td></td><td></td></tr>
                    <tr><td></td><td></td><td></td><td></td><td></td></tr>
                    <tr><td></td><td></td><td></td><td></td><td></td></tr>
                    <tr><td></td><td></td><td></td><td></td><td></td></tr>
                </table>
            </div>
        </div>
    </div>

    <div class="order-row">
        <span>工单编码:</span><input class="txt" value="WO2409040085620_A">
        <span class="order-label-b">成品编码:</span><input class="txt txt-gray" value="">
    </div>

    <div class="dlg-bottom">
        <div class="motion">
            <div class="motion-top">
                <div class="coords">
                    <div class="coord"><span>X(mm):</span><input class="txt txt-gray" value="-1.835"></div>
                    <div class="coord"><span>Y(mm):</span><input class="txt txt-gray coord-short" value="103.949"></div>
                    <div class="coord"><span>Z(mm):</span><input class="txt txt-gray" value="300.609"></div>
                </div>
                <div class="jog-pad">
                    <button class="jog jog-mid">上</button>
                    <button class="jog jog-first">左</button>
                    <button class="jog">慢</button>
                    <button class="jog">右</button>
                    <button class="jog jog-mid">下</button>
                </div>
                <div class="z-col">
                    <button class="jog">Z-</button>
                    <input class="txt" value="1">
                    <button class="jog">Z+</button>
                </div>
            </div>
            <div class="path-row"><span>C面路径:</span><input class="txt txt-gray" value=""><button class="btn">...</button></div>
            <div class="path-row"><span>S面路径:</span><input class="txt txt-gray" value="D:\PCBDoc\4050211799800-8-TOP.hs"><button class="btn">...</button></div>
        </div>

        <div class="commands">
            <button class="btn btn-move">运动到选定对象<br>Mark点</button>
            <div class="cmd-grids">
                <div class="cmd-grid cmd-grid-a">
                    <button class="btn">到软件原点</button>
                    <button class="btn">到工作点</button>
                    <button class="btn btn-small">To MARK1</button>
                    <button class="btn">选中对象打标位</button>
                    <button class="btn">上料点</button>
                    <button class="btn">下料点</button>
                    <button class="btn btn-small">TO MARK2</button>
                    <button class="btn">选中对象扫描位</button>
                </div>
                <div class="cmd-grid cmd-grid-b">
                    <button class="btn">定位测试</button>
                    <button class="btn">选定对象到CCD下</button>
                    <button class="btn">条码试读</button>
                    <button class="btn btn-small">Mark1到振镜下</button>
                    <button class="btn">定位XYZ</button>
                    <button class="btn">读CCD下选定条码</button>
                    <button class="btn">条码复读</button>
                    <button class="btn">停止当前运动</button>
                </div>
            </div>
        </div>
    </div>

    <div class="watermark">Laser线：设备需处于通用平面打标界面</div>
</div>
</body>
</html>
```

FILE: styles.css
```css
* {
    box-sizing: border-box;
}
html, body {
    margin: 0;
    padding: 0;
}
body {
    position: relative;
    width: 1601px;
    height: 870px;
    overflow: hidden;
    background: #f0f0f0;
    color: #111;
    font-family: "Liberation Sans", "Noto Sans CJK SC", sans-serif;
    font-size: 12px;
    display: flex;
    flex-direction: column;
}
.defs {
    position: absolute;
}
button, input {
    font-family: inherit;
    font-size: 12px;
    color: #111;
    padding: 0;
    margin: 0;
}

/* title + menu */
.titlebar {
    height: 30px;
    background: #fff;
    display: flex;
    align-items: center;
    padding: 6px 0 0 3px;
}
.logo {
    width: 17px;
    height: 17px;
    margin-right: 3px;
}
.app-title {
    color: #8b8b8b;
    font-size: 12.5px;
}
.scrap-line {
    width: 406px;
    height: 7px;
    margin: 0 0 17px 272px;
    align-self: flex-end;
    border: 1px solid #555;
    border-top: none;
}
.win-btns {
    display: flex;
    margin-left: auto;
    margin-right: 19px;
    gap: 31px;
}
.win-btns svg {
    width: 14px;
    height: 14px;
}
.menubar {
    height: 21px;
    background: #fff;
    display: flex;
    align-items: center;
    gap: 14px;
    padding-left: 7px;
    color: #555;
}
.menu-icon {
    width: 16px;
    height: 16px;
    margin-right: -7px;
}
.mdi-btns {
    margin-left: auto;
    height: 18px;
    display: flex;
    background: #ececec;
    color: #888;
    font-size: 11px;
    gap: 13px;
    padding: 0 7px 0 3px;
    align-items: center;
}
.toolbar {
    height: 25px;
    background: #fff;
    border-top: 1px solid #aaa;
    border-bottom: 1px solid #bbb;
    display: flex;
    align-items: center;
    padding-left: 1px;
}
.tb {
    width: 23.3px;
    height: 22px;
    flex: none;
    display: flex;
    align-items: center;
    justify-content: center;
}
.tb svg {
    width: 17px;
    height: 17px;
}
.tb-3d {
    color: #999;
    font-weight: bold;
    font-size: 12px;
}
.tb-on {
    background: #bcdcf4;
    outline: 1px solid #a8c8e4;
    outline-offset: -1px;
}
.tb-pink svg {
    background: #ffe4e4;
}
.sep {
    width: 1px;
    height: 20px;
    background: #999;
    margin: 0 1px;
    flex: none;
}
.sep-2 {
    margin: 0 2px;
}
.sep-3 {
    margin: 0 3px;
}
.grip {
    width: 2px;
    height: 20px;
    margin: 0 2px;
    flex: none;
    background: repeating-linear-gradient(#bbb 0 1px, transparent 1px 3px);
}
.grip-mid {
    margin: 0 3px;
}
.grip-wide {
    margin: 0 4px;
}

/* main area */
.workspace {
    height: 773px;
    display: flex;
}
.left-panel {
    width: 184px;
    flex: none;
    padding-top: 3px;
    display: flex;
    flex-direction: column;
}
.panel-head {
    height: 14px;
    display: flex;
    align-items: center;
    flex: none;
    padding-left: 3px;
}
.panel-title {
    width: 163px;
    height: 14px;
    line-height: 14px;
    color: #444;
    background: linear-gradient(to right, #b9c9dc, #dbe5f0);
    font-size: 12px;
}
.panel-x {
    margin-left: 5px;
    font-size: 11px;
    line-height: 11px;
}
.object-list {
    width: 176px;
    height: 206px;
    margin: 0 0 0 3px;
    background: #fff;
    border: 1px solid #808080;
}
.object-head {
    height: 24px;
    display: grid;
    grid-template-columns: 94px 72px;
    align-items: center;
    padding-left: 7px;
}
.object-head span + span {
    border-left: 1px solid #e4e4e4;
    border-right: 1px solid #e4e4e4;
    padding-left: 6px;
    line-height: 24px;
}
.object-row {
    height: 17px;
    display: grid;
    grid-template-columns: 101px 1fr;
    padding-left: 5px;
    align-items: center;
}
.object-row svg {
    width: 16px;
    height: 16px;
}
.panel-head-second {
    margin-top: 44px;
    padding-top: 2px;
    height: 17px;
    border-top: 1px solid #a0a0a0;
}
.left-actions {
    margin-top: auto;
    padding: 0 8px 88px 4px;
}
.btn {
    background: #e1e1e1;
    border: 1px solid #adadad;
    color: #111;
    text-align: center;
    line-height: 1.1;
}
.btn-default {
    border: 2px solid #2a76ae;
}
.btn-small {
    font-size: 11px;
}
.btn-wide {
    width: 171px;
    height: 24px;
    display: block;
}
.left-actions-row {
    margin-top: 1px;
    display: flex;
    gap: 5px;
}
.left-actions-row .btn {
    width: 84px;
    height: 23px;
    font-size: 12px;
}
.left-actions-row .btn + .btn {
    width: 81px;
}
.vtools-col {
    width: 19px;
    flex: none;
    background: #fff;
}
.vtools {
    height: 625px;
    overflow: hidden;
    background: #f0f0f0;
    border-left: 1px solid #999;
    border-bottom: 1px solid #999;
    margin-top: 1px;
    padding-top: 8px;
    display: flex;
    flex-direction: column;
}
.vt {
    height: 23.3px;
    flex: none;
    display: flex;
    align-items: center;
    padding-left: 3px;
}
.vt svg {
    width: 18px;
    height: 18px;
    flex: none;
}
.vt-on {
    background: #bcdcf4;
    height: 26px;
    margin-bottom: 2px;
}
.vsep {
    height: 1px;
    background: #aaa;
    margin: 2px 0;
    flex: none;
}
.canvas {
    width: 1183px;
    flex: none;
    background: #fff;
    border-top: 2px solid #000;
    display: flex;
    flex-direction: column;
    justify-content: space-between;
}
.ruler {
    height: 5px;
    overflow: hidden;
    padding-left: 47px;
    display: flex;
    font-size: 11px;
    line-height: 12px;
    color: #333;
}
.ruler span {
    width: 89px;
    text-align: center;
    flex: none;
}
.back-dialog {
    width: 1156px;
    height: 62px;
    margin-left: 6px;
    padding-left: 18px;
    background: #f0f0f0;
    display: flex;
    align-items: flex-start;
}
.back-label {
    width: 53px;
    flex: none;
    margin-top: 17px;
}
.back-dialog .back-z {
    width: 71px;
    height: 23px;
    margin-top: 12px;
    flex: none;
}
.back-down {
    margin: 4px 0 0 61px;
}
.back-zplus {
    margin: 4px 15px 0 65px;
}
.back-cmds {
    flex: none;
}
.back-clip {
    height: 10px;
    overflow: hidden;
    display: flex;
    align-items: flex-end;
}
.back-clip .btn {
    width: 87px;
    height: 24px;
    flex: none;
    margin-right: 13px;
    font-size: 11.5px;
}
.back-clip .btn:nth-child(2) {
    margin-right: 17px;
}
.back-clip .btn:nth-child(3) {
    margin-right: 15px;
}
.back-clip .btn:nth-child(4) {
    width: 93px;
}
.back-row {
    display: flex;
    margin-top: 8px;
}
.back-row .btn {
    height: 23px;
    width: 128px;
}
.back-row .btn + .btn {
    margin-left: 34px;
    width: 129px;
}
.back-row .btn + .btn + .btn {
    margin-left: 15px;
    width: 93px;
}

/* right side panel */
.right-panel {
    width: 215px;
    flex: none;
    border-left: 1px solid #999;
    padding: 3px 0 0 0;
    display: flex;
    flex-direction: column;
}
.right-panel .panel-head {
    padding-left: 4px;
}
.right-panel .panel-title {
    width: 191px;
}
.txt {
    height: 20px;
    width: 100%;
    border: 1px solid #7a7a7a;
    background: #fff;
    padding-left: 3px;
    font-size: 11.5px;
    min-width: 0;
}
.txt-gray {
    background: #f0f0f0;
    border-color: #808080;
}
.txt-off {
    background: #f0f0f0;
    border-color: #ccc;
    color: #999;
}
.prop-abs {
    display: flex;
    align-items: center;
    margin-top: 9px;
    height: 17px;
    padding-left: 12px;
    gap: 4px;
}
.prop-unit {
    font-size: 11.5px;
    margin-left: 3px;
}
.prop-xyz {
    display: grid;
    grid-template-columns: 12px 48px 5px 8px 54px 8px 8px 54px;
    margin-top: 5px;
    padding-left: 9px;
    height: 20px;
    align-items: center;
}
.prop-xyz span:nth-of-type(2) {
    grid-column: 4;
}
.prop-xyz span:nth-of-type(3) {
    grid-column: 7;
}
.prop-angle {
    display: grid;
    grid-template-columns: 60px 102px 1fr;
    align-items: center;
    height: 20px;
    margin-top: 4px;
    padding-left: 9px;
}
.prop-deg {
    padding-left: 8px;
    margin-top: -5px;
}
.prop-axis {
    display: flex;
    align-items: center;
    padding-left: 9px;
    margin-top: 8px;
    height: 20px;
    white-space: nowrap;
}
.prop-axis .rb {
    margin-left: 6px;
}
.prop-axis .rb + svg {
    width: 17px;
    height: 17px;
    margin-left: 9px;
    margin-right: 11px;
}
.prop-size, .prop-scale {
    display: grid;
    grid-template-columns: 62px 11px 43px 13px 44px;
    align-items: center;
    padding-left: 8px;
    height: 20px;
}
.prop-size {
    margin-top: 17px;
    position: relative;
}
.prop-size::before {
    content: "";
    position: absolute;
    left: 0;
    right: 6px;
    top: -9px;
    border-top: 1px solid #ddd;
}
.prop-scale {
    margin-top: 5px;
    grid-template-columns: 62px 11px 43px 14px 44px 27px;
    position: relative;
}
.prop-scale::after {
    content: "";
    position: absolute;
    left: 0;
    right: 6px;
    top: 23px;
    border-top: 1px solid #ddd;
}
.axis-x {
    font-size: 11px;
    color: #333;
}
.axis-y {
    font-size: 11px;
    color: #333;
    padding-left: 3px;
}
.lock-btn {
    width: 25px;
    height: 23px;
    margin: -5px 0 0 2px;
    background: #bcdcf4;
    border: 1px solid #7ab0dc;
    display: flex;
    align-items: center;
    justify-content: center;
}
.lock-btn svg {
    width: 18px;
    height: 20px;
}
.prop-btns {
    display: grid;
    grid-template-columns: repeat(4, 45px);
    column-gap: 7.5px;
    padding-left: 6px;
    margin-top: 10px;
}
.prop-btns .btn {
    height: 39px;
    font-size: 12.5px;
}
.grid-icon {
    width: 32px;
    height: 32px;
    display: block;
    margin: auto;
}
.panel-head-params {
    margin-top: 53px;
    height: 17px;
    padding-top: 2px;
    border-top: 1px solid #999;
}
.param-box {
    margin: 4px 3px 0 3px;
    height: 105px;
    overflow: hidden;
    background: #fff;
    display: flex;
    border-bottom: 1px solid #888;
    border-top: 1px solid #bbb;
}
.param-table {
    border-collapse: collapse;
    table-layout: fixed;
    width: 190px;
    height: 103px;
    flex: none;
    font-size: 12px;
}
.param-table th {
    height: 23px;
    font-weight: normal;
    border-right: 1px solid #eee;
    padding: 0;
}
.param-table td {
    height: 17px;
    padding: 0;
    text-align: center;
    color: #444;
    border: 1px solid #eee;
}
.param-table td:first-child {
    text-align: left;
    padding-left: 2px;
    background: #f0f0f0;
}
.param-table tr > :first-child {
    width: 17px;
}
.param-table tr > :nth-child(2) {
    width: 40px;
}
.param-table tr > :nth-child(3) {
    width: 39px;
}
.param-table tr > :nth-child(4) {
    width: 44px;
}
.param-on td {
    background: #0078d7;
    color: #dff;
}
.param-table .param-on td:first-child {
    background: #0078d7;
}
.param-table .sw-black, .sw-black {
    background: #000;
}
.param-table .sw-red, .sw-red {
    background: #f00;
}
.param-table .sw-yellow, .sw-yellow {
    background: #ff0;
}
.param-table .sw-green, .sw-green {
    background: #0f0;
}
.param-table .sw-cyan, .sw-cyan {
    background: #0ff;
}
.sw-blue {
    background: #00f;
}
.sw-magenta {
    background: #f0f;
}
.scrollbar {
    width: 17px;
    margin-left: 1px;
    background: #f0f0f0;
    display: flex;
    flex-direction: column;
    align-items: center;
    flex: none;
}
.chev-up, .chev-down {
    width: 6px;
    height: 6px;
    border: solid #555;
    border-width: 2px 0 0 2px;
    transform: rotate(45deg);
    margin: 6px 0 3px;
    flex: none;
}
.chev-down {
    transform: rotate(225deg);
    margin: 2px 0 6px;
}
.thumb {
    width: 16px;
    height: 28px;
    background: #cdcdcd;
    margin: 2px 0 auto;
}
.swatch-row {
    display: flex;
    align-items: center;
    padding-left: 8px;
    margin-top: 3px;
    gap: 2px;
    height: 19px;
    flex: none;
}
.swatch {
    width: 17px;
    height: 19px;
    border: 1px solid #555;
    position: relative;
}
.swatch-dot::after {
    content: "";
    position: absolute;
    left: 5px;
    top: 5px;
    width: 6px;
    height: 6px;
    border-radius: 50%;
    background: #fff;
}
.swatch-fill {
    margin-left: auto;
    margin-right: 9px;
}
.selected-mark {
    align-self: flex-end;
    height: 15px;
    margin: 5px 7px 0 0;
}
.chk {
    display: flex;
    align-items: center;
    gap: 3px;
    white-space: nowrap;
}
.chk-off {
    color: #8c8c8c;
}
.cb {
    appearance: none;
    width: 13px;
    height: 13px;
    margin: 0;
    border: 1px solid #333;
    background: transparent;
    position: relative;
    flex: none;
}
.cb:checked::after {
    content: "";
    position: absolute;
    left: 3.5px;
    top: 0.5px;
    width: 4px;
    height: 8px;
    border: solid #222;
    border-width: 0 1.5px 1.5px 0;
    transform: rotate(40deg);
}
.cb:disabled {
    border-color: #c4c4c4;
}
.cb:disabled:checked::after {
    border-color: #999;
}
.rb {
    appearance: none;
    width: 13px;
    height: 13px;
    margin: 0;
    border: 1px solid #333;
    border-radius: 50%;
    background: #fff;
    flex: none;
}
.rb:checked {
    background: radial-gradient(circle, #333 0 3.5px, #fff 4px);
}
.rb-off {
    border-color: #bbb;
    background: #f0f0f0;
}
.rb-off:checked {
    background: radial-gradient(circle, #aaa 0 3.5px, #f0f0f0 4px);
}
.tabs {
    display: flex;
    margin: 8px 0 0 9px;
    height: 18px;
    flex: none;
}
.tab {
    width: 37px;
    background: #f0f0f0;
    border: 1px solid #e0e0e0;
    border-bottom: none;
    text-align: center;
    margin-top: 1px;
    line-height: 16px;
}
.tab-on {
    width: 45px;
    margin-top: 0;
    background: #fff;
    line-height: 14px;
}
.tab-body {
    margin-left: 9px;
    width: 200px;
    height: 144px;
    background: #fff;
    border: 1px solid #999;
    border-top: 1px solid #ddd;
    padding: 5px 2px 0 3px;
    flex: none;
}
.param-row {
    display: grid;
    grid-template-columns: 132px 59px;
    column-gap: 4px;
    height: 18px;
    margin-bottom: 2px;
}
.param-row span {
    background: #f0f0f0;
    border: 1px solid #000;
    line-height: 16px;
    white-space: nowrap;
    color: #222;
}
.param-row input {
    border: 1px solid #000;
    padding-left: 2px;
    min-width: 0;
    font-size: 11.5px;
}
.combo {
    margin: 3px 0 0 9px;
    width: 200px;
    height: 20px;
    background: #e6e6e6;
    display: flex;
    justify-content: flex-end;
    align-items: center;
    padding-right: 7px;
    border: 1px solid #e0e0e0;
    flex: none;
}
.combo .chev-down {
    border-width: 1px 0 0 1px;
    margin: 0 0 3px;
}
.param-actions {
    display: grid;
    grid-template-columns: 46px 46px 52px;
    column-gap: 23px;
    margin: 6px 0 0 13px;
}
.param-actions .btn {
    height: 21px;
}

/* status bar */
.statusbar {
    box-sizing: content-box;
    height: 18px;
    border-top: 1px solid #bbb;
    border-bottom: 2px solid #000;
    display: flex;
    align-items: center;
    color: #333;
}
.st-cal {
    margin-left: 790px;
    width: 103px;
}
.st-time {
    width: 119px;
    padding-left: 5px;
    border-left: 1px solid #ccc;
}
.st-motor {
    width: 136px;
    padding-left: 4px;
    border-left: 1px solid #ccc;
}
.st-led {
    width: 15px;
    height: 15px;
    border-radius: 50%;
    background: #0ec60e;
    border: 1px solid #222;
    flex: none;
}
.st-limit {
    width: 64px;
    padding-left: 5px;
}
.st-neg {
    width: 63px;
}
.st-user {
    width: 100px;
}
.st-pos {
    font-size: 12.5px;
    white-space: nowrap;
    padding-left: 4px;
    border-left: 1px solid #ccc;
    width: 163px;
}
.st-chain {
    width: 26px;
    height: 17px;
}

/* print dialog, floats over the main window */
.dialog {
    position: absolute;
    left: 201px;
    top: 81px;
    width: 1184px;
    height: 707px;
    background: #efefef;
    border: 1px solid #6a6a6a;
    border-top: 1px solid #444;
    box-shadow: 0 2px 10px rgba(0, 0, 0, 0.25);
}
.dlg-head {
    height: 26px;
    background: #fff;
    display: flex;
    align-items: center;
    justify-content: space-between;
    padding: 0 9px 6px 3px;
}
.dlg-x {
    width: 14px;
    height: 14px;
    margin-top: 3px;
}
.dlg-top {
    height: 444px;
    display: flex;
}
.dlg-left {
    width: 342px;
    flex: none;
    padding-left: 11px;
    padding-top: 5px;
}
.stats {
    width: 322px;
    height: 90px;
    margin: 0;
    padding: 9px 0 0 7px;
    border: 2px solid #d8d8d8;
}
.stats legend {
    padding: 0 2px;
    margin-left: -2px;
    line-height: 14px;
}
.stats-grid {
    display: grid;
    grid-template-columns: 56px 86px 73px 86px;
    grid-auto-rows: 15px;
    row-gap: 8px;
    align-items: center;
}
.stat-label-b {
    padding-left: 13px;
}
.field {
    height: 15px;
    line-height: 14px;
    text-align: right;
    padding-right: 1px;
    font-size: 11px;
    color: #333;
    border: 1px solid;
    border-color: #a0a0a0 #fff #fff #a0a0a0;
    white-space: nowrap;
}
.mode-row {
    display: flex;
    margin-top: 12px;
    height: 30px;
    padding-left: 3px;
    line-height: 13px;
}
.mode-label {
    width: 56px;
    flex: none;
}
.mode-opts {
    display: flex;
    flex-direction: column;
    gap: 6px;
    width: 181px;
    flex: none;
}
.mode-line {
    display: flex;
}
.mode-line .chk {
    width: 75px;
}
.btn-camera {
    width: 80px;
    height: 26px;
    margin-top: 4px;
}
.progress {
    width: 321px;
    height: 16px;
    margin-top: 13px;
    background: #e6e6e6;
    border: 1px solid #c0c0c0;
}
.opt-row {
    display: grid;
    align-items: center;
    padding-left: 4px;
}
.opt-row-a {
    grid-template-columns: 98px 84px 82px 51px;
    margin-top: 9px;
    height: 20px;
}
.interval small {
    font-size: 10.5px;
}
.opt-row-b {
    grid-template-columns: 74px 99px 82px 1fr;
    margin-top: 1px;
    height: 28px;
}
.chk-two {
    margin-top: 10px;
}
.two-line {
    line-height: 12px;
}
.opt-row-c {
    grid-template-columns: 71px 73px 83px 1fr;
    margin-top: 11px;
    height: 15px;
}
.product-label {
    margin: 10px 0 0 2px;
    height: 15px;
    line-height: 15px;
}
.box {
    width: 321px;
    border: 1px solid #bdbdbd;
    border-bottom-color: #fff;
    border-right-color: #fff;
    border-top-color: #999;
    border-left-color: #999;
}
.box-product {
    width: 322px;
    height: 28px;
    margin-top: 7px;
    border-color: #808080;
}
.box-empty {
    height: 33px;
    margin-top: 4px;
}
.box-mode {
    height: 30px;
    margin-top: 6px;
    line-height: 14px;
    font-size: 10.6px;
    color: #333;
    white-space: nowrap;
    overflow: hidden;
}
.big-btns {
    display: grid;
    grid-template-columns: 74px 74px 74px 74px;
    column-gap: 9px;
    margin: 8px 0 0 -3px;
}
.big-btn {
    height: 53px;
    background: #f0f0f0;
    border: 2px solid;
    border-color: #fff #686868 #686868 #fff;
    font-size: 12.5px;
    position: relative;
}
.big-btn:disabled {
    color: #a8a8a8;
}
.big-btn-red {
    padding-left: 20px;
}
.led {
    position: absolute;
    left: 2px;
    top: 17px;
    width: 16px;
    height: 16px;
    border-radius: 50%;
    background: #b8b8b8;
    border: 2px solid #6a8a8a;
}
.dlg-right {
    flex: 1;
    padding-left: 11px;
}
.code-titles {
    display: grid;
    grid-template-columns: 358px 450px;
    justify-items: center;
    height: 35px;
    line-height: 14px;
    padding-top: 15px;
}
.code-titles span + span {
    margin-left: 4px;
}
.code-boxes {
    display: flex;
    gap: 6px;
}
.code-box {
    width: 412px;
    height: 106px;
    background: #fff;
    border: 1px solid #808080;
    padding: 1px 3px;
    font-size: 10.5px;
    color: #333;
    line-height: 15px;
}
.code-box + .code-box {
    width: 409px;
    border-right: none;
}
.result-wrap {
    margin-top: 16px;
    height: 286px;
    background: #fff;
    border: 1px solid #808080;
    border-width: 2px 0 0 1px;
    padding-left: 4px;
    overflow: hidden;
}
.result-table {
    border-collapse: collapse;
    table-layout: fixed;
    width: 808px;
    font-size: 10.5px;
}
.c-no {
    width: 27px;
}
.c-code {
    width: 350px;
}
.c-res {
    width: 40.5px;
}
.result-table th {
    height: 24px;
    font-weight: normal;
    color: #333;
    border-right: 1px solid #ececec;
    padding: 0;
}
.result-table td {
    height: 17px;
    padding: 0;
    text-align: center;
    color: #333;
    border: 1px solid #ececec;
}
.result-ok td {
    background: #0f0;
    border-color: #e0ffe0;
    color: #2a5a2a;
}
.order-row {
    display: flex;
    align-items: center;
    height: 21px;
    margin-top: 7px;
    padding-left: 7px;
}
.order-row span {
    width: 61px;
    flex: none;
}
.order-row .txt {
    width: 113px;
    font-size: 11px;
    height: 21px;
}
.order-row .order-label-b {
    margin-left: 18px;
    width: 64px;
}
.order-row .txt-gray {
    width: 114px;
}
.dlg-bottom {
    display: flex;
    margin-top: 11px;
}
.motion {
    width: 360px;
    flex: none;
    padding-top: 11px;
}
.motion-top {
    display: flex;
    height: 123px;
}
.coords {
    width: 152px;
    flex: none;
    padding: 13px 0 0 10px;
    display: flex;
    flex-direction: column;
    gap: 22px;
}
.coord {
    display: grid;
    grid-template-columns: 46px 67px;
    align-items: center;
    height: 22px;
}
.coord .txt {
    height: 22px;
}
.coord .coord-short {
    width: 65px;
}
.jog {
    width: 37px;
    height: 35px;
    background: #06b806;
    border: 2px solid #8fb28f;
    color: #0c4a78;
    font-size: 17px;
    line-height: 1;
    flex: none;
}
.jog-pad {
    width: 127px;
    flex: none;
    display: grid;
    grid-template-columns: repeat(3, 37px);
    grid-auto-rows: 35px;
    gap: 9px 8px;
}
.jog-mid {
    grid-column: 2;
}
.jog-first {
    grid-column: 1;
}
.z-col {
    width: 41px;
    margin-left: 21px;
    display: flex;
    flex-direction: column;
    align-items: center;
    justify-content: space-between;
    flex: none;
}
.z-col .txt {
    height: 22px;
}
.path-row {
    display: grid;
    grid-template-columns: 55px 215px 33px;
    align-items: center;
    height: 23px;
    margin-top: 7px;
    padding-left: 7px;
}
.path-row .txt {
    height: 23px;
}
.path-row .btn {
    width: 33px;
    height: 23px;
    margin-left: 10px;
    line-height: 30px;
}
.commands {
    display: flex;
    padding-top: 9px;
}
.btn-move {
    width: 98px;
    height: 44px;
    margin-right: 7px;
    flex: none;
}
.cmd-grids {
    display: flex;
    flex-direction: column;
    gap: 3px;
}
.cmd-grid {
    display: grid;
    grid-auto-rows: 44px;
    gap: 3px 7px;
    width: 356px;
}
.cmd-grid-a {
    grid-template-columns: 80px 80px 80px 95px;
}
.cmd-grid-b {
    grid-template-columns: 69px 105px 69px 94px;
    column-gap: 6px;
}
.watermark {
    position: absolute;
    left: 140px;
    top: 299px;
    font-size: 54px;
    line-height: 70px;
    color: #f05252;
    white-space: nowrap;
    pointer-events: none;
}
```
